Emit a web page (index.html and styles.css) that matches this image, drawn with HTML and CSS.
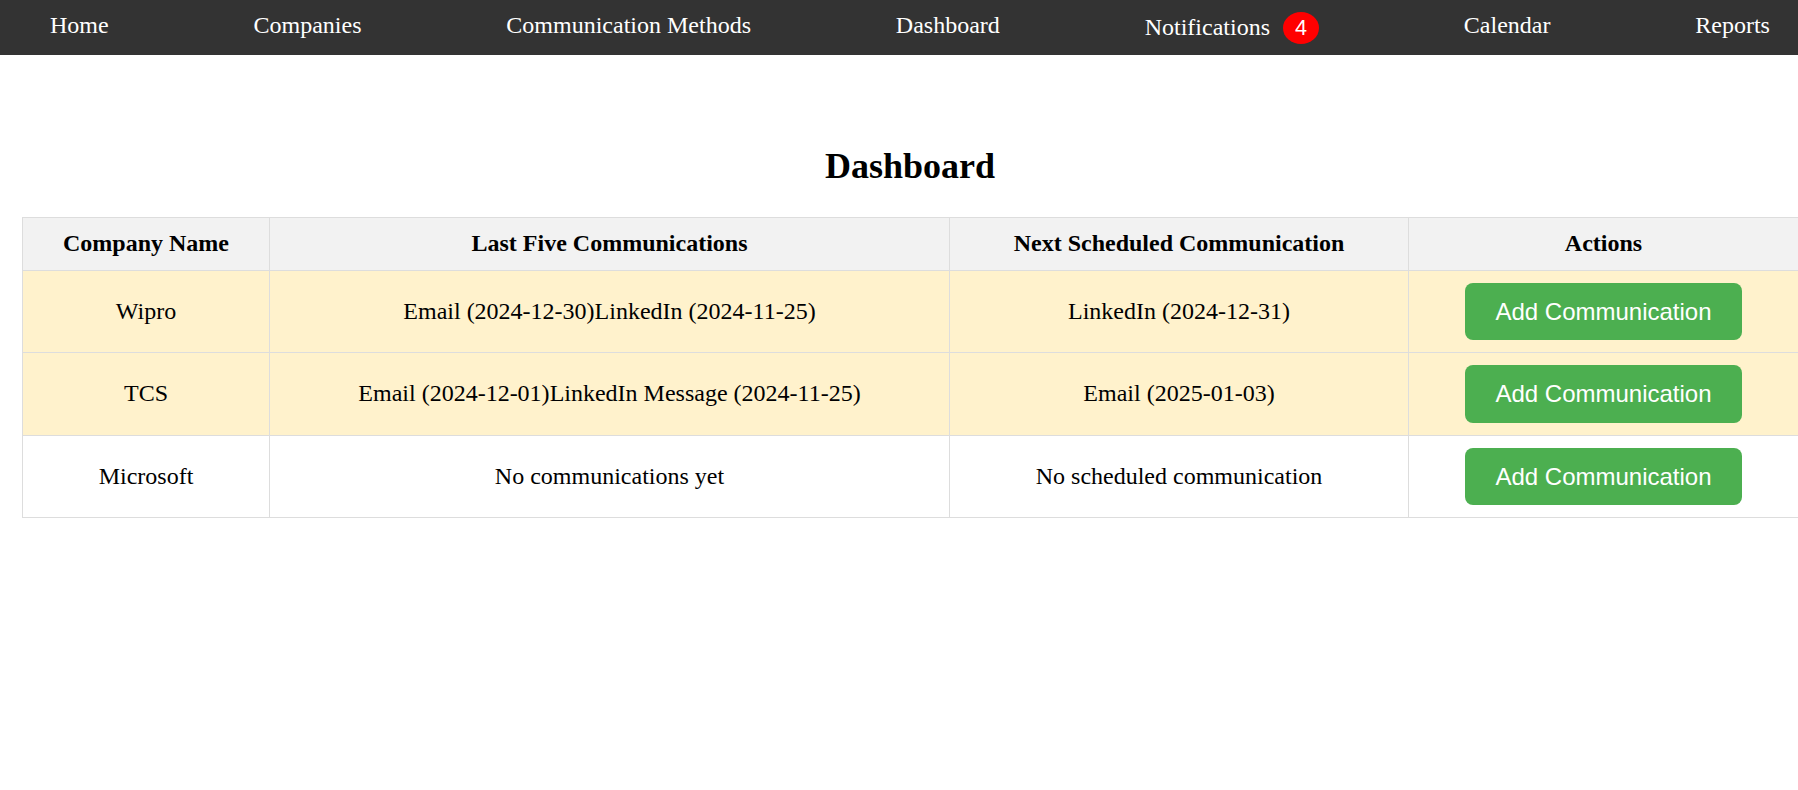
FILE: index.html
```html
<!DOCTYPE html>
<html lang="en">
<head>
<meta charset="utf-8">
<title>Dashboard</title>
<link rel="stylesheet" href="styles.css">
</head>
<body>
<nav class="navbar">
  <a class="nav-link" href="#">Home</a>
  <a class="nav-link" href="#">Companies</a>
  <a class="nav-link" href="#">Communication Methods</a>
  <a class="nav-link" href="#">Dashboard</a>
  <a class="nav-link" href="#">Notifications<span class="badge">4</span></a>
  <a class="nav-link" href="#">Calendar</a>
  <a class="nav-link" href="#">Reports</a>
</nav>
<main class="main">
  <h2 class="title">Dashboard</h2>
  <table class="grid">
    <colgroup>
      <col class="c1"><col class="c2"><col class="c3"><col class="c4">
    </colgroup>
    <thead>
      <tr>
        <th>Company Name</th>
        <th>Last Five Communications</th>
        <th>Next Scheduled Communication</th>
        <th>Actions</th>
      </tr>
    </thead>
    <tbody>
      <tr class="highlight">
        <td>Wipro</td>
        <td><span>Email (2024-12-30)</span><span>LinkedIn (2024-11-25)</span></td>
        <td>LinkedIn (2024-12-31)</td>
        <td><button class="btn">Add Communication</button></td>
      </tr>
      <tr class="highlight">
        <td>TCS</td>
        <td><span>Email (2024-12-01)</span><span>LinkedIn Message (2024-11-25)</span></td>
        <td>Email (2025-01-03)</td>
        <td><button class="btn">Add Communication</button></td>
      </tr>
      <tr>
        <td>Microsoft</td>
        <td>No communications yet</td>
        <td>No scheduled communication</td>
        <td><button class="btn">Add Communication</button></td>
      </tr>
    </tbody>
  </table>
</main>
</body>
</html>
```
FILE: styles.css
```css
html, body {
  margin: 0;
  padding: 0;
  background: #fff;
  font-family: "Liberation Serif", "Times New Roman", serif;
  color: #000;
}

.navbar {
  box-sizing: border-box;
  height: 55px;
  background: #333333;
  display: flex;
  justify-content: space-between;
  align-items: flex-start;
  padding: 12px 28px 0 50px;
}

.nav-link {
  color: #fff;
  text-decoration: none;
  font-size: 24px;
  line-height: 27.6px;
  white-space: nowrap;
}

.badge {
  display: inline-block;
  margin-left: 13px;
  padding: 4px 12px;
  border-radius: 50%;
  background: #ff0000;
  color: #fff;
  font-family: "Liberation Sans", Arial, sans-serif;
  font-size: 21.6px;
  line-height: 24px;
}

.main {
  margin-left: 22px;
  width: 1776px;
}

.title {
  margin: 91px 0 30px;
  font-size: 36px;
  line-height: 41px;
  font-weight: bold;
  text-align: center;
}

.grid {
  width: 1776px;
  border-collapse: collapse;
  table-layout: fixed;
  font-size: 24px;
}

.c1 { width: 247px; }
.c2 { width: 680px; }
.c3 { width: 459px; }
.c4 { width: 390px; }

.grid th,
.grid td {
  border: 1px solid #dddddd;
  padding: 12px;
  text-align: center;
  vertical-align: middle;
  line-height: 27.6px;
}

.grid th {
  background: #f2f2f2;
  font-weight: bold;
}

.grid tr.highlight td {
  background: #fff2cc;
}

.btn {
  display: inline-block;
  border: none;
  border-radius: 8px;
  background: #4caf50;
  color: #fff;
  font-family: "Liberation Sans", Arial, sans-serif;
  font-size: 24px;
  line-height: 27.6px;
  padding: 15px 30px;
  margin: 0;
  cursor: pointer;
  vertical-align: middle;
}
```
